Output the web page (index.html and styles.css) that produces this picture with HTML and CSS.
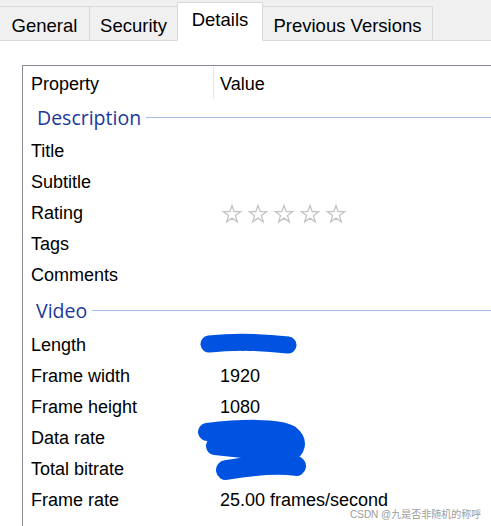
FILE: index.html
```html
<!DOCTYPE html>
<html>
<head>
<meta charset="utf-8">
<link rel="stylesheet" href="styles.css">
</head>
<body>
<div class="tabs">
  <div class="tab tab-general">General</div>
  <div class="tab tab-security">Security</div>
  <div class="tab tab-active">Details</div>
  <div class="tab tab-prev">Previous Versions</div>
  <div class="tab-rest"></div>
</div>
<div class="page">
  <div class="list">
    <div class="head">
      <div class="hcol">Property</div>
      <div class="hval">Value</div>
    </div>
    <div class="group group-desc"><span class="gtitle">Description</span><span class="gline"></span></div>
    <div class="row"><div class="lab">Title</div><div class="val"></div></div>
    <div class="row"><div class="lab">Subtitle</div><div class="val"></div></div>
    <div class="row"><div class="lab">Rating</div><div class="val stars">
      <svg class="star" viewBox="0 0 20 20"><path d="M10 1.5 L12.2 7.6 L18.6 7.7 L13.5 11.6 L15.3 17.8 L10 14.1 L4.7 17.8 L6.5 11.6 L1.4 7.7 L7.8 7.6 Z"/></svg>
      <svg class="star" viewBox="0 0 20 20"><path d="M10 1.5 L12.2 7.6 L18.6 7.7 L13.5 11.6 L15.3 17.8 L10 14.1 L4.7 17.8 L6.5 11.6 L1.4 7.7 L7.8 7.6 Z"/></svg>
      <svg class="star" viewBox="0 0 20 20"><path d="M10 1.5 L12.2 7.6 L18.6 7.7 L13.5 11.6 L15.3 17.8 L10 14.1 L4.7 17.8 L6.5 11.6 L1.4 7.7 L7.8 7.6 Z"/></svg>
      <svg class="star" viewBox="0 0 20 20"><path d="M10 1.5 L12.2 7.6 L18.6 7.7 L13.5 11.6 L15.3 17.8 L10 14.1 L4.7 17.8 L6.5 11.6 L1.4 7.7 L7.8 7.6 Z"/></svg>
      <svg class="star" viewBox="0 0 20 20"><path d="M10 1.5 L12.2 7.6 L18.6 7.7 L13.5 11.6 L15.3 17.8 L10 14.1 L4.7 17.8 L6.5 11.6 L1.4 7.7 L7.8 7.6 Z"/></svg>
    </div></div>
    <div class="row"><div class="lab">Tags</div><div class="val"></div></div>
    <div class="row"><div class="lab">Comments</div><div class="val"></div></div>
    <div class="group group-video"><span class="gtitle">Video</span><span class="gline"></span></div>
    <div class="row"><div class="lab">Length</div><div class="val">00:00:00</div></div>
    <div class="row"><div class="lab">Frame width</div><div class="val">1920</div></div>
    <div class="row"><div class="lab">Frame height</div><div class="val">1080</div></div>
    <div class="row"><div class="lab">Data rate</div><div class="val">000kbps</div></div>
    <div class="row"><div class="lab">Total bitrate</div><div class="val">0000</div></div>
    <div class="row"><div class="lab">Frame rate</div><div class="val">25.00 frames/second</div></div>
  </div>
  <svg class="scribble" width="491" height="526" viewBox="0 0 491 526">
    <g fill="none" stroke="#0052e0" stroke-linecap="round" stroke-linejoin="round">
      <path d="M209 344 C 235 341, 262 342, 288 345" stroke-width="17"/>
      <path d="M207 432 C 240 428, 278 427, 290 434 C 300 442, 296 450, 288 454 L 215 446" stroke-width="18"/>
      <path d="M230 440 L 288 444" stroke-width="16"/>
      <path d="M226 470 C 250 466, 278 463, 296 466" stroke-width="20"/>
      <path d="M282 455 L 298 465" stroke-width="14"/>
    </g>
  </svg>
  <div class="watermark">CSDN @九是否非随机的称呼</div>
</div>
</body>
</html>
```
FILE: styles.css
```css
html, body {
  margin: 0;
  padding: 0;
  background: #ffffff;
  width: 491px;
  height: 526px;
  overflow: hidden;
  font-family: "Liberation Sans", Arial, sans-serif;
  color: #000;
}

.tabs {
  display: flex;
  align-items: flex-end;
  height: 40px;
  background: #f0f0f0;
  border-bottom: 1px solid #d9d9d9;
}

.tab {
  box-sizing: border-box;
  height: 35px;
  margin-bottom: -1px;
  border: 1px solid #d9d9d9;
  border-left: none;
  background: #f0f0f0;
  font-size: 18.5px;
  display: flex;
  align-items: center;
  justify-content: center;
  padding-top: 4px;
}

.tab-general { width: 90px; border-left: none; }
.tab-security { width: 88px; }
.tab-active {
  width: 86px;
  height: 39px;
  background: #ffffff;
  border-bottom: 1px solid #ffffff;
  border-top: 1px solid #d9d9d9;
  margin-left: -1px;
  border-left: 1px solid #d9d9d9;
  padding-top: 0;
  padding-bottom: 3px;
}
.tab-prev { width: 170px; }
.tab-rest { flex: 1; }

.page {
  position: relative;
  height: 485px;
  padding-top: 24px;
  box-sizing: border-box;
  overflow: hidden;
}

.list {
  margin-left: 22px;
  border-left: 1px solid #858a93;
  border-top: 1px solid #858a93;
  height: 600px;
}

.head {
  display: flex;
  height: 35px;
  align-items: stretch;
  font-size: 18px;
}
.hcol {
  box-sizing: border-box;
  width: 191px;
  padding-left: 8px;
  padding-top: 2px;
  display: flex;
  align-items: center;
  border-right: 1px solid #e6e6e6;
  margin: 1px 0 2px;
}
.hval {
  padding-left: 6px;
  display: flex;
  align-items: center;
  padding-top: 1px;
}

.group {
  display: flex;
  align-items: center;
  padding-left: 14px;
}
.group-desc { height: 35px; }
.group-video { height: 39px; padding-top: 2px; box-sizing: border-box; padding-left: 13px; }
.gtitle {
  font-family: "Open Sans", "Noto Sans", sans-serif;
  font-size: 19.5px;
  color: #1c389c;
  line-height: 1;
  padding-bottom: 2px;
}
.gline {
  flex: 1;
  height: 1px;
  background: #a8bbe2;
  margin-left: 5px;
  margin-top: -3px;
}

.row {
  display: flex;
  align-items: center;
  height: 31px;
  font-size: 18px;
}
.lab {
  box-sizing: border-box;
  width: 191px;
  padding-left: 8px;
}
.val {
  padding-left: 6px;
}

.stars {
  display: flex;
  gap: 6px;
  padding-left: 8px;
  padding-top: 1px;
}
.star {
  width: 20px;
  height: 20px;
}
.star path {
  fill: none;
  stroke: #c4c4c4;
  stroke-width: 1.3;
  stroke-linejoin: miter;
}

.scribble {
  position: absolute;
  left: 0;
  top: -41px;
  pointer-events: none;
}

.watermark {
  position: absolute;
  left: 350px;
  top: 465px;
  font-family: "Liberation Sans", "Noto Sans CJK SC", sans-serif;
  font-size: 10px;
  color: #9c9c9c;
  white-space: nowrap;
}
```
